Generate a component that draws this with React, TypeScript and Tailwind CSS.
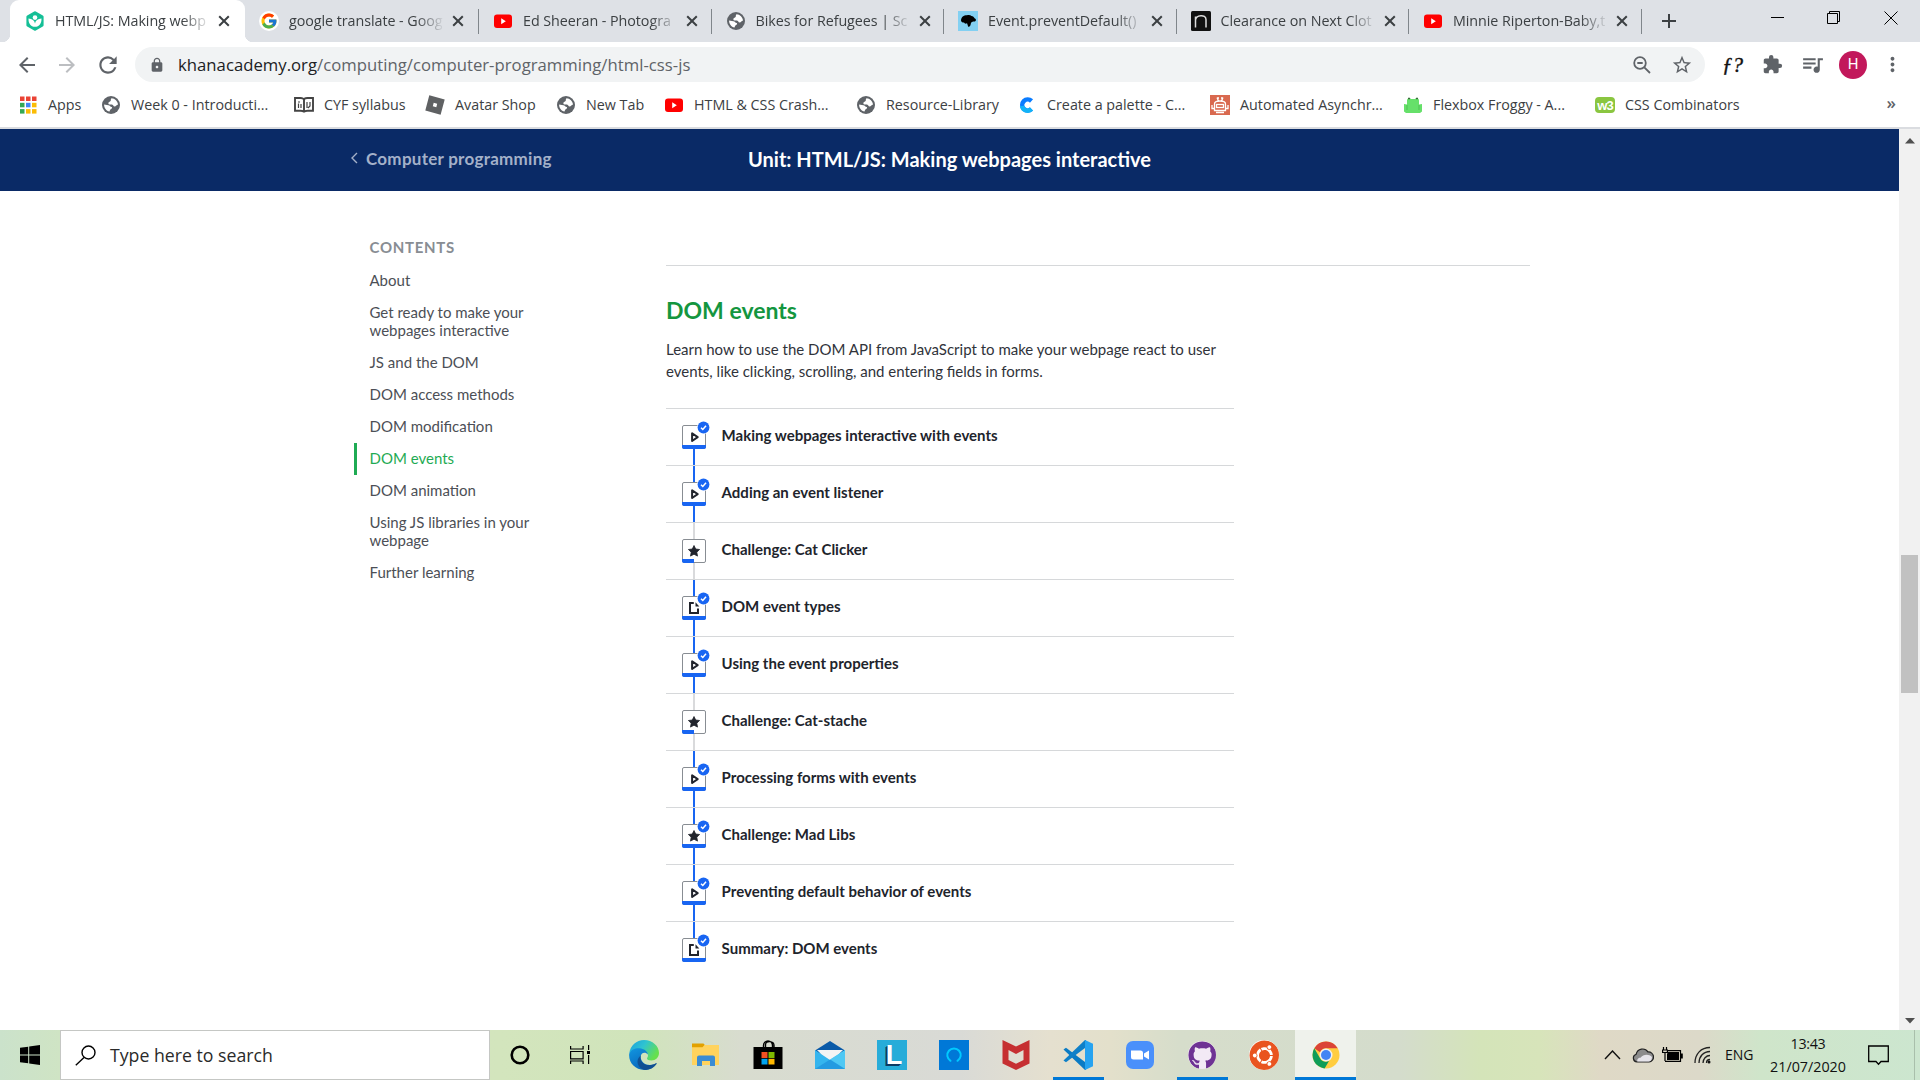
import React from "react";
import {
  MdArrowBack,
  MdArrowForward,
  MdAdd,
  MdExtension,
  MdLock,
  MdMoreVert,
  MdQueueMusic,
  MdRefresh,
  MdStarBorder,
} from "react-icons/md";
import { FcGoogle } from "react-icons/fc";
import { FaUbuntu, FaGithub } from "react-icons/fa";

/* ---------- Favicons ---------- */

const KhanIcon = () => (
  <svg viewBox="0 0 20 20" className="h-5 w-5">
    <path d="M9.2.4a1.6 1.6 0 0 1 1.6 0l7 4a1.6 1.6 0 0 1 .8 1.4v8.4c0 .6-.3 1.1-.8 1.4l-7 4a1.6 1.6 0 0 1-1.6 0l-7-4a1.6 1.6 0 0 1-.8-1.4V5.8c0-.6.3-1.1.8-1.4z" fill="#14bf96" />
    <circle cx="10" cy="6.6" r="2.3" fill="#fff" />
    <path d="M3.5 7.500c3.800.2 6.100 2.300 6.500 5 .4-2.700 2.700-4.800 6.500-5 .2 5-2.300 8.300-6.500 8.300S3.300 12.500 3.500 7.500z" fill="#fff" />
  </svg>
);

const GoogleIcon = () => (
  <span className="flex h-5 w-5 items-center justify-center rounded-full bg-white">
    <FcGoogle size={18} />
  </span>
);

const YoutubeIcon = () => (
  <svg viewBox="0 0 20 20" className="h-5 w-5">
    <rect x="1" y="3.5" width="18" height="13.5" rx="3" fill="#f00" />
    <path d="M8.200 7.300v6l4.600-3z" fill="#fff" />
  </svg>
);

const GlobeIcon = () => (
  <svg viewBox="0 0 20 20" className="h-5 w-5">
    <circle cx="10" cy="10" r="9" fill="#5f6368" />
    <path d="M10.500 3.200c3.500.2 6.200 3 6.500 6.300-1.500.3-2 1.800-3.300 2-1.500.1-1.200-1.700-2.700-1.900-1.600-.1-3.500.2-3.700-1.400-.1-1.300 1.600-1.300 2.300-2.200.6-.9-.2-2 .9-2.800z" fill="#fff" />
    <path d="M3.100 9.500l4.300.8c1.600.3 2 1.500 3.200 1.700.8.300.6 1.500-.3 1.800-1 .3-1.200 1.500-1.800 2.700-3.200-.6-5.500-3.500-5.400-7z" fill="#fff" />
  </svg>
);

const DinoIcon = () => (
  <svg viewBox="0 0 20 20" className="h-5 w-5">
    <rect width="20" height="20" fill="#83d0f2" />
    <path d="M3 9.500C3.200 6 5.500 4.200 9 4.200c2-.4 3.500-.2 4.500.8 1.500.2 2.500 1 3 2.200.8.300 1.500 1 1.500 2l-1 1.300c-1.500-.2-3 .2-4 1.300-.3 1.200-.2 2.500-1.200 3.500l-1.300.7c-.8-1-.8-2.500-1.500-3.700-1.500.7-2.500.3-3-.8-1 .3-2.700-.3-3-2z" />
  </svg>
);

const NextIcon = () => (
  <svg viewBox="0 0 20 20" className="h-5 w-5">
    <rect width="20" height="20" rx="1.5" fill="#111" />
    <path d="M4.500 16.500v-11m0 3.500C5 3.800 14.800 2.800 15 8.500v8" fill="none" stroke="#ddd" strokeWidth="1.5" />
  </svg>
);

const AppsIcon = () => (
  <svg viewBox="0 0 20 20" className="h-5 w-5">
    {["#ea4335", "#ea4335", "#ea4335", "#34a853", "#4285f4", "#fbbc05", "#34a853", "#fbbc05", "#fbbc05"].map((c, i) => (
      <rect key={i} x={2 + (i % 3) * 6} y={1.5 + Math.floor(i / 3) * 6.3} width="4.5" height="4.5" fill={c} />
    ))}
  </svg>
);

const BookIcon = () => (
  <svg viewBox="0 0 20 20" className="h-5 w-5" fill="none" stroke="#444" strokeWidth="1.9">
    <path d="M1 3h5.500c1.800 0 3.500.8 3.500 2 0-1.200 1.700-2 3.500-2H19v12.800h-5.500c-1.800 0-3.500.6-3.500 1.600 0-1-1.700-1.600-3.500-1.600H1zM10 5v12" />
    <path d="M4.500 13V8.500M7 13V9M4 7h2M13 13V7m3 0v4l-2 2" strokeWidth="1.2" />
  </svg>
);

const RobloxIcon = () => (
  <svg viewBox="0 0 20 20" className="h-5 w-5">
    <path d="M4.300.3l15.400 4.200L15.600 19.700.3 15.500zM8.700 7.800l-.9 3.500 3.500.9.9-3.500z" fill="#5f6163" fillRule="evenodd" />
  </svg>
);

const CoolorsIcon = () => (
  <svg viewBox="0 0 20 20" className="h-5 w-5">
    <path d="M14.500 6A5.500 5.500 0 1 0 14.500 14" fill="none" stroke="#0a7cff" strokeWidth="4.5" />
    <path d="M14.500 14A5.500 5.500 0 0 1 5.100 11" fill="none" stroke="#12b3f7" strokeWidth="4.5" />
  </svg>
);

const RobotIcon = () => (
  <svg viewBox="0 0 20 20" className="h-5 w-5" fill="none" stroke="#fff" strokeWidth="1.3">
    <rect width="20" height="20" fill="#d9694f" stroke="none" />
    <path d="M4.500 15.500V9c0-2 2-3 5.500-3s5.500 1 5.500 3v6.500zM2 10v3.500h2.500M18 10v3.500h-2.500M7 2.500L8.500 6M13 2.500L11.500 6M7 3h2m2 0h2M6 17.500h8" />
    <rect x="6.5" y="9.5" width="7" height="3" />
  </svg>
);

const FrogIcon = () => (
  <svg viewBox="0 0 20 20" className="h-5 w-5">
    <path d="M4 5.500A2.200 2.200 0 0 1 8 4h4a2.200 2.200 0 0 1 4 1.500v4l3-.5v7.500l-2 1.500H3l-2-1.500V9l3 .5z" fill="#66e06a" />
    <path d="M5 3.500h2M13 3.500h2" stroke="#3d6b3d" strokeWidth="1.4" />
    <path d="M4 10v5M16 10v5" stroke="#4fc153" strokeWidth="1" />
  </svg>
);

const W3Icon = () => (
  <span className="flex h-4 w-5 items-center justify-center rounded-sm bg-[#8ac640] font-['Liberation_Sans'] text-[13px] font-bold leading-none tracking-[-1px] text-white">
    w3
  </span>
);

/* ---------- Browser chrome ---------- */

const TABS: { title: string; icon: React.ReactNode }[] = [
  { title: "HTML/JS: Making webp", icon: <KhanIcon /> },
  { title: "google translate - Goog", icon: <GoogleIcon /> },
  { title: "Ed Sheeran - Photogra", icon: <YoutubeIcon /> },
  { title: "Bikes for Refugees | Sc", icon: <GlobeIcon /> },
  { title: "Event.preventDefault()", icon: <DinoIcon /> },
  { title: "Clearance on Next Clot", icon: <NextIcon /> },
  { title: "Minnie Riperton-Baby,t", icon: <YoutubeIcon /> },
];

const BOOKMARKS: { label: string; icon: React.ReactNode; width: string }[] = [
  { label: "Apps", icon: <AppsIcon />, width: "w-[83px]" },
  { label: "Week 0 - Introducti...", icon: <GlobeIcon />, width: "w-[193px]" },
  { label: "CYF syllabus", icon: <BookIcon />, width: "w-[131px]" },
  { label: "Avatar Shop", icon: <RobloxIcon />, width: "w-[131px]" },
  { label: "New Tab", icon: <GlobeIcon />, width: "w-[108px]" },
  { label: "HTML & CSS Crash...", icon: <YoutubeIcon />, width: "w-[192px]" },
  { label: "Resource-Library", icon: <GlobeIcon />, width: "w-[161px]" },
  { label: "Create a palette - C...", icon: <CoolorsIcon />, width: "w-[193px]" },
  { label: "Automated Asynchr...", icon: <RobotIcon />, width: "w-[193px]" },
  { label: "Flexbox Froggy - A...", icon: <FrogIcon />, width: "w-[192px]" },
  { label: "CSS Combinators", icon: <W3Icon />, width: "w-[160px]" },
];

function TabStrip() {
  return (
    <div className="flex h-[42px] justify-between bg-[#dee1e6] pl-[10px]">
      <div className="flex">
        {TABS.map((tab, i) => (
          <div
            key={i}
            className={
              i === 0
                ? "relative flex h-[42px] w-[235px] items-center rounded-t-[9px] bg-white pl-[15px]"
                : i === 1
                  ? "relative flex h-[42px] w-[234px] items-center pl-[14px]"
                  : "relative flex h-[42px] w-[232.5px] items-center pl-[14px]"
            }
          >
            {i === 0 && (
              <>
                <span className="absolute bottom-0 -left-2 h-2 w-2 bg-[radial-gradient(circle_at_0_0,#dee1e6_8px,#fff_8.5px)]" />
                <span className="absolute -right-2 bottom-0 h-2 w-2 bg-[radial-gradient(circle_at_100%_0,#dee1e6_8px,#fff_8.5px)]" />
              </>
            )}
            <span className="flex w-5 shrink-0">{tab.icon}</span>
            <span className="ml-[10px] w-[159px] shrink-0 whitespace-nowrap text-[14.3px] leading-6 tracking-[-0.05px] text-[#3c4043] [mask-image:linear-gradient(to_right,black_80%,transparent_98%)]">
              {tab.title}
            </span>
            <svg width="12" height="12" className="ml-1 shrink-0" stroke="#3c4043" strokeWidth="2">
              <path d="M1.200 1.200l9.600 9.600M10.800 1.200l-9.600 9.600" />
            </svg>
            {i > 0 && <span className="absolute top-[9px] right-0 h-[25px] w-px bg-[#80868b]" />}
          </div>
        ))}
        <div className="flex w-[54px] items-center justify-center">
          <MdAdd size={24} className="text-[#3c4043]" />
        </div>
      </div>
      <div className="flex h-9 items-center">
        <div className="flex w-[57px] justify-center">
          <svg width="14" height="14" className="ml-0.5"><path d="M0 6.500h13" stroke="#000" /></svg>
        </div>
        <div className="flex w-[57px] justify-center">
          <svg width="14" height="14" fill="none" stroke="#000"><path d="M.5 2.500h10v10H.5zM2.500 2.500V.5h10v10h-2" /></svg>
        </div>
        <div className="flex w-[58px] justify-center">
          <svg width="14" height="14" stroke="#000"><path d="M.5.5l13 13M13.500.5l-13 13" /></svg>
        </div>
      </div>
    </div>
  );
}

function AddressBar() {
  return (
    <div className="flex h-[45px] items-center bg-white text-[#5f6368]">
      <div className="flex w-[135px] items-center pl-[15px]">
        <MdArrowBack size={24} />
        <MdArrowForward size={24} className="ml-4 text-[#bcbec1]" />
        <MdRefresh size={26} className="ml-[16px]" />
      </div>
      <div className="flex h-[35px] w-[1570px] items-center rounded-full bg-[#f1f3f4] pr-[12px] pl-[14px]">
        <MdLock size={16} />
        <span className="ml-[13px] flex-1 text-[16.7px] leading-6 tracking-[0.02px]">
          <span className="text-[#202124]">khanacademy.org</span>/computing/computer-programming/html-css-js
        </span>
        <svg width="18" height="18" fill="none" stroke="#5f6368" strokeWidth="1.8">
          <circle cx="7" cy="7" r="5.8" />
          <path d="M4.300 7h5.400M11.300 11.300l5.700 5.700" />
        </svg>
        <MdStarBorder size={22} className="ml-[20px]" />
      </div>
      <div className="flex flex-1 items-center">
        <span className="ml-[17px] w-[22px] whitespace-nowrap font-['Liberation_Serif'] text-[21px] leading-6 text-[#111] italic [-webkit-text-stroke:0.4px_#111]">
          ƒ?
        </span>
        <MdExtension size={21} className="ml-[18px]" />
        <MdQueueMusic size={25} className="ml-[17px]" />
        <span className="ml-[14px] flex h-[28px] w-[28px] items-center justify-center rounded-full bg-[#c2185b] font-[Roboto] text-[15px] text-white">
          H
        </span>
        <MdMoreVert size={23} className="ml-[14px]" />
      </div>
    </div>
  );
}

function BookmarksBar() {
  return (
    <div className="flex h-[42px] items-center border-b-2 border-[#dadce0] bg-white pb-1 pl-[18px]">
      {BOOKMARKS.map((b) => (
        <div key={b.label} className={`flex shrink-0 items-center ${b.width}`}>
          {b.icon}
          <span className="ml-[10px] whitespace-nowrap text-[14.3px] leading-6 text-[#3c4043]">{b.label}</span>
        </div>
      ))}
      <span className="ml-auto pr-[24px] pb-1 text-[17px] leading-5 font-semibold text-[#5f6368]">»</span>
    </div>
  );
}

/* ---------- Course page ---------- */

const CONTENTS = [
  "About",
  "Get ready to make your webpages interactive",
  "JS and the DOM",
  "DOM access methods",
  "DOM modification",
  "DOM events",
  "DOM animation",
  "Using JS libraries in your webpage",
  "Further learning",
];

type Kind = "video" | "challenge" | "article";
const LESSONS: { title: string; kind: Kind; done: boolean }[] = [
  { title: "Making webpages interactive with events", kind: "video", done: true },
  { title: "Adding an event listener", kind: "video", done: true },
  { title: "Challenge: Cat Clicker", kind: "challenge", done: false },
  { title: "DOM event types", kind: "article", done: true },
  { title: "Using the event properties", kind: "video", done: true },
  { title: "Challenge: Cat-stache", kind: "challenge", done: false },
  { title: "Processing forms with events", kind: "video", done: true },
  { title: "Challenge: Mad Libs", kind: "challenge", done: true },
  { title: "Preventing default behavior of events", kind: "video", done: true },
  { title: "Summary: DOM events", kind: "article", done: true },
];

function KindGlyph({ kind }: { kind: Kind }) {
  return (
    <svg viewBox="0 0 24 24" className="absolute -top-px -left-px h-6 w-6">
      {kind === "video" && (
        <path d="M10.100 8.200v7.800l5.600-3.900z" fill="none" stroke="#21242c" strokeWidth="2" strokeLinejoin="round" />
      )}
      {kind === "challenge" && (
        <path
          d="M12 6.500l1.700 3.500 3.900.5-2.800 2.700.7 3.900-3.500-1.900-3.500 1.900.7-3.900-2.800-2.700 3.900-.5z"
          fill="#21242c"
          stroke="#21242c"
          strokeWidth=".8"
          strokeLinejoin="round"
        />
      )}
      {kind === "article" && (
        <>
          <path d="M11.800 7H8v10h8v-4.500" fill="none" stroke="#21242c" strokeWidth="2" />
          <path d="M13.500 6.200v4.300h3.800z" fill="#21242c" />
        </>
      )}
    </svg>
  );
}

function Lesson({ title, kind, done, first, last }: { title: string; kind: Kind; done: boolean; first: boolean; last: boolean }) {
  const line = done ? "w-0.5 bg-[#1865f2]" : "w-0.5 bg-[#d9dadc]";
  return (
    <li className="flex h-[57px] border-t border-[#d6d8da] pl-4">
      <div className="flex w-6 flex-col items-center">
        <span className={`h-4 ${first ? "" : line}`} />
        <span className="relative h-6 w-6 rounded-[2px] border border-[#888d93] bg-white">
          <KindGlyph kind={kind} />
          <span
            className={
              done
                ? "absolute -bottom-px -left-px h-1 w-6 rounded-b-[2px] bg-[#1865f2]"
                : "absolute -bottom-px -left-px h-1 w-3 rounded-bl-[2px] bg-[#1865f2]"
            }
          />
          {done && (
            <svg viewBox="0 0 13 13" className="absolute -top-[5px] -right-[5px] h-[13px] w-[13px]">
              <circle cx="6.5" cy="6.5" r="6.5" fill="#fff" />
              <circle cx="6.5" cy="6.5" r="5.9" fill="#1865f2" />
              <path d="M4 6.800l1.800 1.700 3.200-3.700" fill="none" stroke="#fff" strokeWidth="1.5" />
            </svg>
          )}
        </span>
        <span className={`h-4 ${last ? "" : line}`} />
      </div>
      <span className="mt-4 ml-[15.6px] text-[15px] leading-5 font-bold text-[#21242c]">{title}</span>
    </li>
  );
}

function CoursePage() {
  return (
    <div className="flex min-h-0 flex-1 flex-col bg-white font-[Lato,sans-serif]">
      <header className="flex h-[62px] items-center bg-[#0a2a66] pb-px">
        <div className="flex w-[748px] items-center pl-[351px] text-[#a4b1c9]">
          <svg width="7" height="12" className="mb-1 fill-none stroke-current"><path d="M6 1L1 6l5 5" strokeWidth="1.4" /></svg>
          <span className="ml-2 pb-px text-[17px] leading-6 font-bold tracking-[0.27px]">Computer programming</span>
        </div>
        <h1 className="pb-[2px] text-[20px] leading-6 font-bold whitespace-nowrap text-white">Unit: HTML/JS: Making webpages interactive</h1>
      </header>
      <div className="flex flex-1">
        <nav className="mt-[47px] ml-[354px] w-[200px]">
          <h2 className="mb-2 pl-[15.5px] text-[15px] leading-[19px] font-bold tracking-[0.7px] text-[#888d93]">CONTENTS</h2>
          {CONTENTS.map((c) => (
            <div
              key={c}
              className={
                c === "DOM events"
                  ? "border-l-[3px] border-[#1fab54] pt-[6px] pb-[8px] pl-[12.5px] text-[15px] leading-[18px] text-[#1fab54]"
                  : "border-l-[3px] border-transparent pt-[6px] pb-[8px] pl-[12.5px] text-[15px] leading-[18px] text-[#4c4f56]"
              }
            >
              {c}
            </div>
          ))}
        </nav>
        <main className="ml-[112px] w-[864px] pt-[74px]">
          <hr className="border-[#d6d8da]" />
          <h2 className="mt-[29px] text-[23px] leading-[30px] font-bold text-[#14963f]">DOM events</h2>
          <p className="mt-[13px] w-[568px] text-[15px] leading-[22px] text-[#30333a]">
            Learn how to use the DOM API from JavaScript to make your webpage react to user events, like clicking,
            scrolling, and entering fields in forms.
          </p>
          <ul className="mt-[26px] w-[568px]">
            {LESSONS.map((l, i) => (
              <Lesson key={l.title} {...l} first={i === 0} last={i === LESSONS.length - 1} />
            ))}
          </ul>
        </main>
      </div>
    </div>
  );
}

function Scrollbar() {
  return (
    <div className="flex w-[21px] flex-col items-center bg-[#f1f1f1]">
      <svg width="10" height="6" className="mt-[9px]"><path d="M5 0l5 5.500H0z" fill="#505050" /></svg>
      <span className="mt-[411px] h-[138px] w-[17px] bg-[#c1c1c1]" />
      <svg width="10" height="6" className="mt-auto mb-[6px]"><path d="M0 0h10L5 5.500z" fill="#505050" /></svg>
    </div>
  );
}

/* ---------- Taskbar ---------- */

const I = "h-[30px] w-[30px]";

const EdgeIcon = () => (
  <svg viewBox="0 0 30 30" className={I}>
    <defs>
      <linearGradient id="eg1" x1="0" y1="0" x2="1" y2="0.5"><stop offset="0" stopColor="#1a9fe0" /><stop offset=".5" stopColor="#2fc4d0" /><stop offset="1" stopColor="#66e04d" /></linearGradient>
      <linearGradient id="eg2" x1="0" y1="0" x2="0.6" y2="1"><stop offset="0" stopColor="#1296e0" /><stop offset="1" stopColor="#0763b8" /></linearGradient>
    </defs>
    <path d="M.3 13.500C1.200 5.500 7.500 0 15 0c8.500 0 15 6 15 13 0 4.500-3.500 7.500-7.500 7.500-3 0-4.500-1-4.500-2 0-.8 1-1.300 1-3 0-3.500-4-6.500-9-6.500-4 0-7.500 1.500-9.700 4.500z" fill="url(#eg1)" />
    <path d="M.2 13.800C2 9.500 6.500 8 10.500 8.300c4.500.4 8 3 8.500 6.200-3-3.500-7.500-1.500-7.300 2.500.2 4.500 4 8 9 8 3 0 5-1 7-2-2.500 4.500-7 7-12.500 7C6 30-.7 22.500.2 13.800z" fill="url(#eg2)" />
    <path d="M11.800 15.500c-1.500 5 2.500 9.700 8.500 9.700 2.600 0 5-.9 6.700-1.900.7-.3 1 .2.600.8C25 28 20.500 30 16.500 30 9 29 5.500 20.500 11.800 15.500z" fill="#114a8b" opacity=".85" />
  </svg>
);
const FolderIcon = () => (
  <svg viewBox="0 0 30 30" className={I}>
    <path d="M1 3.500h11.500l1.500 1.700-2 3H1z" fill="#e2a100" />
    <path d="M1 7.200h10.500L13.500 5H28v20H1z" fill="#ffd35e" />
    <path d="M6 26v-8.500a2 2 0 0 1 2-2h14a2 2 0 0 1 2 2V26h-5v-5h-8v5z" fill="#3a8cd4" />
  </svg>
);
const StoreIcon = () => (
  <svg viewBox="0 0 30 30" className={I}>
    <path d="M10.500 9V5.500a4.500 4.500 0 0 1 9 0V9M12.500 9V4.500c0-4 8.500-4 8.500 1V9" fill="none" stroke="#000" strokeWidth="1.4" />
    <path d="M.5 7h29v22H.5z" />
    <path d="M8.500 12h6v6h-6z" fill="#f25022" />
    <path d="M15.500 12h6v6h-6z" fill="#7fba00" />
    <path d="M8.500 18.800h6v5.700h-6z" fill="#00a4ef" />
    <path d="M15.500 18.800h6v5.700h-6z" fill="#ffb900" />
  </svg>
);
const MailIcon = () => (
  <svg viewBox="0 0 30 30" className={I}>
    <path d="M0 10.500L15 1l15 9.500-2 3H2z" fill="#0a5aa8" />
    <path d="M2 10h26L17 21h-4z" fill="#f4f4f4" />
    <path d="M0 10v19h30V10L15 20z" fill="#35b5ee" />
    <path d="M30 10v19L15 19.500z" fill="#4fc8f4" />
    <path d="M0 29L15 19.500 30 29z" fill="#1e90dc" opacity=".7" />
  </svg>
);
const LIcon = () => (
  <span className="flex h-[30px] w-[30px] items-center justify-center bg-[#27acd9] pl-1 font-['Liberation_Sans'] text-[27px] leading-none font-bold text-white [text-shadow:-1px_1px_0_#0d3a63,-2px_2px_0_#0d3a63]">
    L
  </span>
);
const AlexaIcon = () => (
  <svg viewBox="0 0 30 30" className={I}>
    <path d="M0 0h30v30H0z" fill="#0078d7" />
    <path d="M11.500 20.800a6.700 6.700 0 1 1 7 0" fill="none" stroke="#00caff" strokeWidth="2" strokeLinecap="round" />
  </svg>
);
const McAfeeIcon = () => (
  <svg viewBox="0 0 30 30" className={I}>
    <path d="M1.500 0L15 6.500 28.500 0v23.500L15 30 1.500 23.500zM7.500 10v10L15 23.800l7.500-3.800V10L15 14z" fill="#c62f31" fillRule="evenodd" />
  </svg>
);
const CodeIcon = () => (
  <svg viewBox="0 0 30 30" className={I}>
    <path d="M.5 9.500L3 7.700l20 15.100V30h-1z" fill="#0a7bc4" />
    <path d="M.5 20.500L3 22.300 23 7.200V0h-1z" fill="#0f80c8" />
    <path d="M22 0l8 3.700v22.600L22 30z" fill="#26a3f0" />
  </svg>
);
const ZoomIcon = () => (
  <svg viewBox="0 0 30 30" className={I}>
    <rect x="1" y="1" width="28" height="28" rx="7" fill="#4a90fb" />
    <path d="M6 10.500h9.500a2.500 2.500 0 0 1 2.500 2.500v6.500H8.500A2.500 2.500 0 0 1 6 17zM19 13.500l5-3v9l-5-3z" fill="#fff" />
  </svg>
);
const GithubIcon = () => (
  <span className="flex h-7 w-7 items-center justify-center overflow-hidden rounded-full bg-[#f2e9f5]">
    <FaGithub size={29} className="shrink-0 text-[#6e3294]" />
  </span>
);
const UbuntuIcon = () => (
  <span className="flex h-[30px] w-[30px] items-center justify-center overflow-hidden rounded-full bg-white">
    <FaUbuntu size={31} className="shrink-0 text-[#e95420]" />
  </span>
);
const ChromeIcon = () => (
  <svg viewBox="0 0 28 28" className="h-7 w-7">
    <circle cx="14" cy="14" r="13.5" fill="#ffcd40" />
    <path d="M14 .5A13.500 13.500 0 0 1 25.700 7.300H14a6.700 6.700 0 0 0-6 4L2.300 7.300A13.500 13.500 0 0 1 14 .5z" fill="#db4437" />
    <path d="M2.300 7.300l5.900 10.200A6.700 6.700 0 0 0 14 20.700l3-.6-4.400 7.300A13.500 13.500 0 0 1 2.300 7.300z" fill="#0f9d58" />
    <circle cx="14" cy="14" r="6.5" fill="#f1f1f1" />
    <circle cx="14" cy="14" r="5" fill="#4285f4" />
  </svg>
);

const APPS: { icon: React.ReactNode; state?: "open" | "active" }[] = [
  { icon: <EdgeIcon /> },
  { icon: <FolderIcon /> },
  { icon: <StoreIcon /> },
  { icon: <MailIcon /> },
  { icon: <LIcon /> },
  { icon: <AlexaIcon /> },
  { icon: <McAfeeIcon /> },
  { icon: <CodeIcon />, state: "open" },
  { icon: <ZoomIcon /> },
  { icon: <GithubIcon />, state: "open" },
  { icon: <UbuntuIcon /> },
  { icon: <ChromeIcon />, state: "active" },
];

function Taskbar() {
  return (
    <footer className="flex h-[50px] bg-[linear-gradient(to_right,#cbe2cb_0,#cfe4c4_60px,#d3e5bd_500px,#d0e4bb_640px,#d8dccf_740px,#d9dad6_960px,#e5e0cf_1050px,#e3e0cb_1110px,#d6ddcb_1180px,#d4dccc_1400px,#d4e4b9_1480px,#d7e4ba_1540px,#dfd9c6_1600px,#dcd9c9_1700px,#cfe5ca_1760px,#cce6cf_1920px)] text-black">
      <div className="flex w-[60px] items-center justify-center">
        <svg width="20" height="20"><path d="M0 2.800l8.200-1.100v7.800H0zM9.200 1.500L20 0v9.500H9.200zM0 10.500h8.200v7.800L0 17.200zM9.200 10.500H20V20L9.200 18.500z" /></svg>
      </div>
      <div className="flex h-[50px] w-[430px] items-center border border-[#c5c7c4] bg-white pl-[14px]">
        <svg width="21" height="21" fill="none" stroke="#000" strokeWidth="1.4"><circle cx="13.5" cy="7.5" r="6.5" /><path d="M9 12.500L.8 20.200" /></svg>
        <span className="ml-[14px] text-[17.7px] leading-6 text-[#2a2a2a]">Type here to search</span>
      </div>
      <div className="flex w-[60px] items-center justify-center">
        <svg width="20" height="20" fill="none" stroke="#000" strokeWidth="2.6"><circle cx="10" cy="10" r="8.3" /></svg>
      </div>
      <div className="flex w-[63px] items-center justify-center pr-[3px]">
        <svg width="20" height="20" fill="none" stroke="#000" strokeWidth="1.2"><path d="M.6 1v3h12.500V1M.6 6.500h12.500v7.300H.6zM.6 19v-3h12.500v3M18.600 0v5M18.600 10v9" /><path d="M17 6h3v3h-3z" fill="#000" stroke="none" /></svg>
      </div>
      {APPS.map((a, i) => (
        <div
          key={i}
          className={
            a.state === "active"
              ? "relative flex w-[61px] items-center justify-center bg-[#eff2ec]"
              : "relative flex w-[62px] items-center justify-center"
          }
        >
          {a.icon}
          {a.state === "open" && <span className="absolute bottom-0 left-[6px] h-[3px] w-[51px] bg-[#0078d7]" />}
          {a.state === "active" && <span className="absolute inset-x-0 bottom-0 h-[3px] bg-[#0078d7]" />}
        </div>
      ))}
      <div className="ml-auto flex items-center">
        <svg width="17" height="10" fill="none" stroke="#111" strokeWidth="1.4"><path d="M1 9l7.500-8L16 9" /></svg>
        <svg width="22" height="16" className="ml-[11px]" stroke="#222" strokeWidth="1.2">
          <path d="M5 15a4 4 0 0 1-.8-7.800A6.500 6.500 0 0 1 16 5a5 5 0 0 1 1 10z" fill="#8c8c8c" />
          <path d="M5.500 14.500c-1-2 1-4 3-3.800C11 7 17 6.500 20 10c0 3-1.500 4.500-3.500 4.500z" fill="#e6e4ea" stroke="none" />
        </svg>
        <svg width="21" height="16" className="ml-[8px]" fill="none" stroke="#000" strokeWidth="1.2">
          <path d="M1.500 0v3M4.500 0v3M.6 3h4.800v2.500H.6zM3 5.500V14M6 3.600h12.500v10.800H3" />
          <path d="M6 5h11v8H5V7z" fill="#000" stroke="none" />
          <path d="M19.800 6.500v5" strokeWidth="2" />
        </svg>
        <svg width="18" height="18" className="ml-[11px]" fill="none" stroke="#222" strokeWidth="1.3">
          <path d="M1 17C1 8 7 1.500 16 1.500M5 17C5 10.500 9.500 5.500 16 5.500M9 17c0-4 3-7.500 7-7.500M12.500 17c0-2 1.500-3.500 3.500-3.500" />
          <circle cx="15" cy="16" r="1.5" fill="#111" stroke="none" />
        </svg>
        <span className="ml-[13px] w-[30px] text-[14px] leading-5 text-[#111]">ENG</span>
        <div className="ml-[13px] flex w-[80px] flex-col items-center text-[14.3px] leading-[23px] text-[#111]">
          <span className="tracking-[-0.3px]">13:43</span>
          <span>21/07/2020</span>
        </div>
        <svg width="21" height="21" className="mr-[25px] ml-[20px]" fill="none" stroke="#000" strokeWidth="1.3"><path d="M.7 1h19.600v15.500H13l-2.500 2.700L8 16.500H.7z" /></svg>
        <span className="mr-[5px] h-[50px] w-px bg-[#a9bfab]" />
      </div>
    </footer>
  );
}

export default function App() {
  return (
    <div className="flex h-[1080px] w-[1920px] flex-col overflow-hidden bg-white font-['Open_Sans',sans-serif]">
      <TabStrip />
      <AddressBar />
      <BookmarksBar />
      <div className="flex min-h-0 flex-1">
        <CoursePage />
        <Scrollbar />
      </div>
      <Taskbar />
    </div>
  );
}
